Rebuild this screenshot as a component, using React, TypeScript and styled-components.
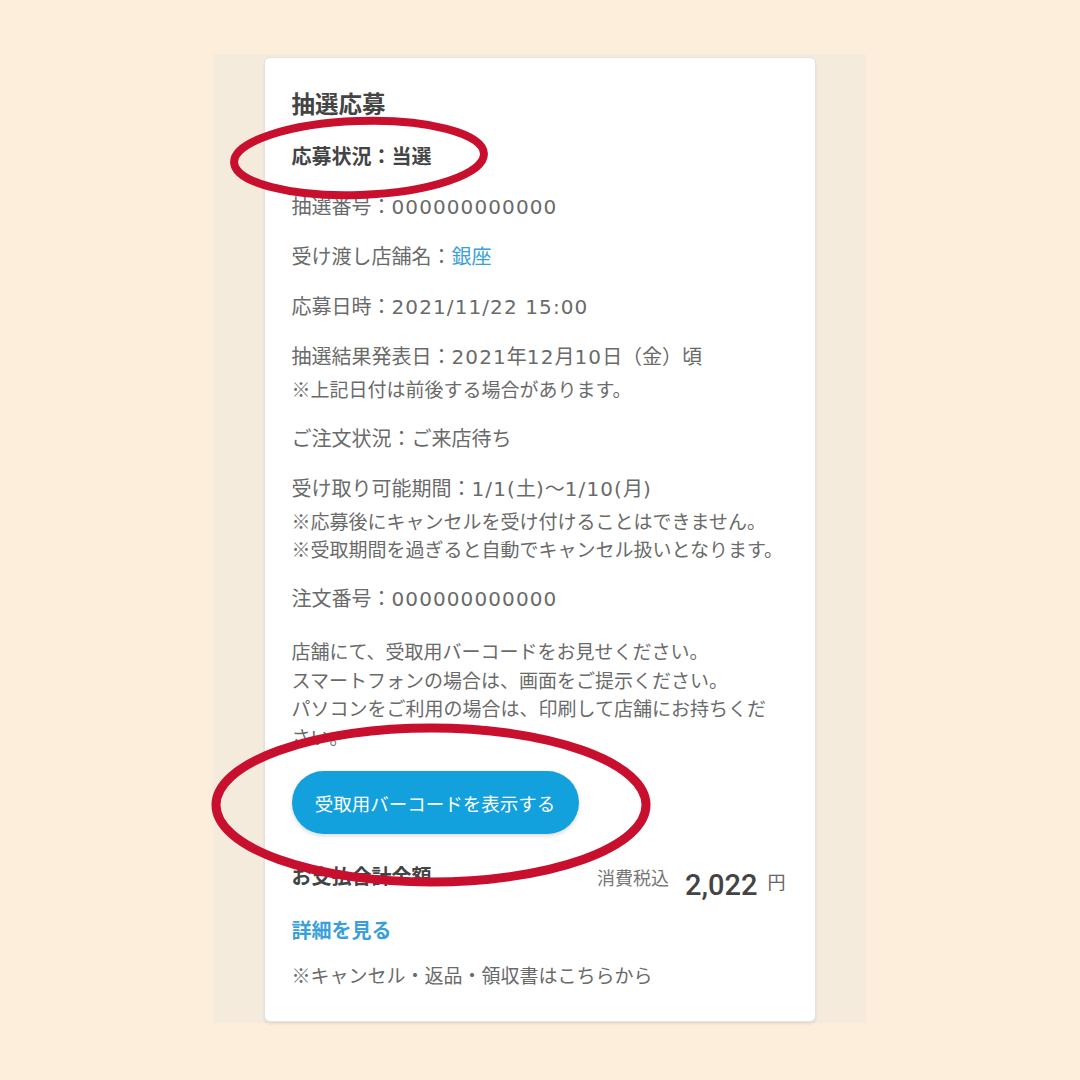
import React from 'react';
import styled, { createGlobalStyle } from 'styled-components';

const GlobalStyle = createGlobalStyle`
  html, body {
    margin: 0;
    padding: 0;
  }
  body {
    background: #fdeedb;
    font-family: "Noto Sans CJK JP", "Noto Sans", sans-serif;
  }
`;

const Page = styled.div`
  position: relative;
  width: 1080px;
  height: 1080px;
  box-sizing: border-box;
  padding: 54px 0 0 213px;
  background: #fdeedb;
`;

const Shot = styled.div`
  width: 653px;
  height: 969px;
  box-sizing: border-box;
  padding-top: 3px;
  background: #f5ebdc;
  display: flex;
  justify-content: center;
`;

const Card = styled.section`
  width: 552px;
  height: 965px;
  box-sizing: border-box;
  padding: 29px 28px 0 27px;
  background: #fff;
  border: 1px solid #e2e2e2;
  border-radius: 6px;
  box-shadow: 0 2px 3px rgba(0, 0, 0, 0.08);
  display: flex;
  flex-direction: column;
  color: #6a6a6a;
`;

const Title = styled.h2`
  margin: 0 0 22px;
  font-size: 23.5px;
  line-height: 32px;
  font-weight: 700;
  color: #444;
`;

const Status = styled.div`
  font-size: 20px;
  line-height: 30px;
  font-weight: 700;
  color: #444;
`;

const Item = styled.div`
  margin-top: 20px;
`;

const Line = styled.div`
  font-size: 20px;
  line-height: 30px;
  white-space: nowrap;
`;

const Notes = styled.div`
  margin-top: 4px;
  font-size: 19px;
  line-height: 28px;
`;

const Num = styled.span`
  font-family: "DejaVu Sans", sans-serif;
  letter-spacing: 1.1px;
  line-height: 1;
`;

const Link = styled.a<{ $bold?: boolean }>`
  color: #3aa0da;
  font-weight: ${p => (p.$bold ? 700 : 400)};
  text-decoration: none;
`;

const Paragraph = styled.p`
  margin: 24px 0 0;
  max-width: 488px;
  font-size: 19px;
  line-height: 28.5px;
`;

const BarcodeButton = styled.button`
  margin-top: 20px;
  align-self: flex-start;
  width: 287px;
  height: 63px;
  border: none;
  border-radius: 32px;
  background: #12a1dc;
  color: #fff;
  font-family: inherit;
  font-size: 18.5px;
  box-shadow: 0 2px 4px rgba(0, 0, 0, 0.15);
`;

const TotalRow = styled.div`
  margin-top: 26px;
  height: 30px;
  display: flex;
  align-items: center;
  justify-content: space-between;
`;

const TotalLabel = styled.span`
  font-size: 20px;
  font-weight: 700;
  color: #444;
`;

const Price = styled.div`
  display: flex;
  align-items: center;
  gap: 10px;
  margin-right: 1px;
`;

const TaxNote = styled.span`
  font-size: 18px;
  color: #777;
  padding-top: 4px;
  margin-right: 6px;
`;

const Amount = styled.span`
  font-family: Roboto, "Liberation Sans", sans-serif;
  font-size: 29px;
  font-weight: 500;
  color: #444;
  padding-top: 20px;
`;

const Yen = styled.span`
  font-size: 18px;
  color: #666;
  padding-top: 12px;
`;

const DetailLine = styled.div`
  margin-top: 25px;
  font-size: 20px;
  line-height: 30px;
`;

const Footer = styled.div`
  margin-top: 15px;
  font-size: 19px;
  line-height: 30px;
`;

const Marks = styled.svg`
  position: absolute;
  left: 0;
  top: 0;
  width: 1080px;
  height: 1080px;
  pointer-events: none;
`;

export default function App() {
  return (
    <Page>
      <GlobalStyle />
      <Shot>
        <Card>
          <Title>抽選応募</Title>
          <Status>応募状況：当選</Status>
          <Item>
            <Line>抽選番号：<Num>000000000000</Num></Line>
          </Item>
          <Item>
            <Line>受け渡し店舗名：<Link>銀座</Link></Line>
          </Item>
          <Item>
            <Line>応募日時：<Num>2021/11/22 15:00</Num></Line>
          </Item>
          <Item>
            <Line>抽選結果発表日：<Num>2021</Num>年<Num>12</Num>月<Num>10</Num>日（金）頃</Line>
            <Notes>※上記日付は前後する場合があります。</Notes>
          </Item>
          <Item>
            <Line>ご注文状況：ご来店待ち</Line>
          </Item>
          <Item>
            <Line>受け取り可能期間：<Num>1/1(</Num>土<Num>)</Num>〜<Num>1/10(</Num>月<Num>)</Num></Line>
            <Notes>
              ※応募後にキャンセルを受け付けることはできません。
              <br />
              ※受取期間を過ぎると自動でキャンセル扱いとなります。
            </Notes>
          </Item>
          <Item>
            <Line>注文番号：<Num>000000000000</Num></Line>
          </Item>
          <Paragraph>
            店舗にて、受取用バーコードをお見せください。
            <br />
            スマートフォンの場合は、画面をご提示ください。
            <br />
            パソコンをご利用の場合は、印刷して店舗にお持ちください。
          </Paragraph>
          <BarcodeButton>受取用バーコードを表示する</BarcodeButton>
          <TotalRow>
            <TotalLabel>お支払合計金額</TotalLabel>
            <Price>
              <TaxNote>消費税込</TaxNote>
              <Amount>2,022</Amount>
              <Yen>円</Yen>
            </Price>
          </TotalRow>
          <DetailLine>
            <Link $bold>詳細を見る</Link>
          </DetailLine>
          <Footer>※キャンセル・返品・領収書はこちらから</Footer>
        </Card>
      </Shot>
      <Marks viewBox="0 0 1080 1080">
        <ellipse
          cx="359"
          cy="158"
          rx="125"
          ry="37"
          transform="rotate(-2 359 158)"
          fill="none"
          stroke="#c8102e"
          strokeWidth="8"
        />
        <ellipse
          cx="431"
          cy="805"
          rx="215"
          ry="77"
          fill="none"
          stroke="#c8102e"
          strokeWidth="9"
        />
      </Marks>
    </Page>
  );
}
